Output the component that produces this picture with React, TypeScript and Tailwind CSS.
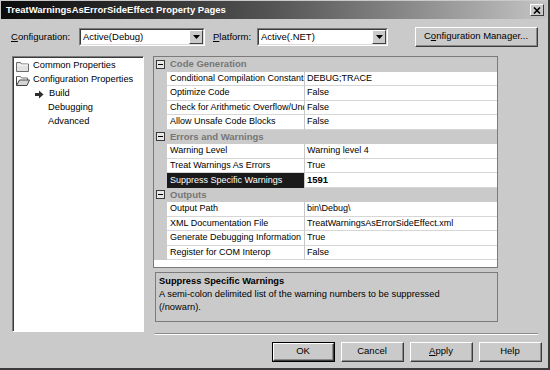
import React from 'react';

const font = { fontFamily: '"Liberation Sans", Arial, sans-serif' };

type Row = { name: string; value: string; selected?: boolean };
type Category = { title: string; rows: Row[] };

const categories: Category[] = [
  {
    title: 'Code Generation',
    rows: [
      { name: 'Conditional Compilation Constants', value: 'DEBUG;TRACE' },
      { name: 'Optimize Code', value: 'False' },
      { name: 'Check for Arithmetic Overflow/Underflow', value: 'False' },
      { name: 'Allow Unsafe Code Blocks', value: 'False' },
    ],
  },
  {
    title: 'Errors and Warnings',
    rows: [
      { name: 'Warning Level', value: 'Warning level 4' },
      { name: 'Treat Warnings As Errors', value: 'True' },
      { name: 'Suppress Specific Warnings', value: '1591', selected: true },
    ],
  },
  {
    title: 'Outputs',
    rows: [
      { name: 'Output Path', value: 'bin\\Debug\\' },
      { name: 'XML Documentation File', value: 'TreatWarningsAsErrorSideEffect.xml' },
      { name: 'Generate Debugging Information', value: 'True' },
      { name: 'Register for COM Interop', value: 'False' },
    ],
  },
];

function Combo({ width, text }: { width: string; text: string }) {
  return (
    <div className={`${width} h-[18px] flex border-t border-l border-[#7c7c7c] border-b border-r border-b-white border-r-white`}>
      <div className="flex-1 flex border-t border-l border-[#3a3a3a] border-b border-r border-b-[#dcdcdc] border-r-[#dcdcdc] bg-white">
        <span className="flex-1 pl-[2px] leading-[14px] text-[9.5px] text-black">{text}</span>
        <DropButton />
      </div>
    </div>
  );
}

function DropButton() {
  return (
    <div className="w-[14px] h-full bg-[#cacaca] border-t border-l border-white border-b border-r border-b-[#404040] border-r-[#404040] flex items-center justify-center">
      <svg width="7" height="4" viewBox="0 0 7 4">
        <path d="M0 0h7L3.5 4z" fill="#000" />
      </svg>
    </div>
  );
}

function Button({ children, def, width = 'w-[63px]' }: { children: React.ReactNode; def?: boolean; width?: string }) {
  return (
    <div className={`${width} h-[20px] ${def ? 'border border-black' : ''} flex`}>
      <div className="flex-1 flex border-t border-l border-white border-b border-r border-b-[#3c3c3c] border-r-[#3c3c3c] bg-[#cacaca]">
        <div className="flex-1 flex items-center justify-center border-b border-r border-[#8a8a8a] text-[9.5px] text-black">
          {children}
        </div>
      </div>
    </div>
  );
}

function ClosedFolder() {
  return (
    <svg width="13" height="11" viewBox="0 0 13 11">
      <path d="M0.5 1.5h4l1 1.5h7v7.5h-12z" fill="#e2e2e2" stroke="#6c6c6c" />
      <path d="M1 4h11" stroke="#ffffff" />
    </svg>
  );
}

function OpenFolder() {
  return (
    <svg width="14" height="11" viewBox="0 0 14 11">
      <path d="M0.5 1.5h4l1 1.5h6v2" fill="none" stroke="#6c6c6c" />
      <path d="M0.5 1.5v9h10.5l2.5-5.5h-10l-3 5.5" fill="#d6d6d6" stroke="#444" />
    </svg>
  );
}

function Arrow() {
  return (
    <svg width="9" height="9" viewBox="0 0 9 9">
      <path d="M0 3h4V0.5L8.5 4.5 4 8.5V6H0z" fill="#2e2e2e" />
    </svg>
  );
}

function Expander() {
  return (
    <div className="w-[9px] h-[9px] border border-[#3a3a3a] bg-[#e8e8e8] flex items-center justify-center">
      <div className="w-[5px] h-px bg-black" />
    </div>
  );
}

export default function App() {
  return (
    <div className="w-[550px] h-[370px] bg-[#cacaca] border-r-2 border-b-2 border-r-[#3a3a3a] border-b-[#3a3a3a] flex flex-col overflow-hidden" style={font}>
      {/* title bar */}
      <div className="h-[18px] mt-[1px] mx-[1px] flex items-center bg-linear-to-r from-[#0c0c0c] via-[#555555] to-[#c4c4c4] pl-[5px] pr-[3px]">
        <span className="flex-1 text-white font-bold text-[9.5px] leading-none">
          TreatWarningsAsErrorSideEffect Property Pages
        </span>
        <div className="w-[14px] h-[12px] bg-[#cacaca] border-t border-l border-white border-b border-r border-b-[#3a3a3a] border-r-[#3a3a3a] flex items-center justify-center">
          <svg width="8" height="7" viewBox="0 0 8 7">
            <path d="M1 0.5l6 6M7 0.5l-6 6" stroke="#000" strokeWidth="1.6" />
          </svg>
        </div>
      </div>

      {/* configuration row */}
      <div className="mt-[9px] h-[18px] flex items-center text-[9.5px] text-black">
        <span className="ml-[11px] w-[68px]">
          <span className="underline">C</span>onfiguration:
        </span>
        <Combo width="w-[126px]" text="Active(Debug)" />
        <span className="ml-[8px] w-[44px]">
          <span className="underline">P</span>latform:
        </span>
        <Combo width="w-[131px]" text="Active(.NET)" />
        <div className="ml-[27px]">
          <Button width="w-[123px]">
            C<span className="underline">o</span>nfiguration Manager...
          </Button>
        </div>
      </div>

      {/* main area */}
      <div className="mt-[10px] flex text-[9.3px] text-black">
        {/* tree */}
        <div className="ml-[12px] w-[132px] h-[276px] border-t border-l border-[#7c7c7c] border-b border-r border-b-white border-r-white flex">
          <div className="flex-1 border-t border-l border-[#3a3a3a] bg-white pt-[1px]">
            <div className="h-[14px] flex items-center pl-[2px] gap-[4px]">
              <ClosedFolder />
              <span>Common Properties</span>
            </div>
            <div className="h-[14px] flex items-center pl-[2px] gap-[3px]">
              <OpenFolder />
              <span>Configuration Properties</span>
            </div>
            <div className="h-[14px] flex items-center pl-[21px] gap-[5px]">
              <Arrow />
              <span>Build</span>
            </div>
            <div className="h-[14px] flex items-center pl-[34px]">
              <span>Debugging</span>
            </div>
            <div className="h-[14px] flex items-center pl-[34px]">
              <span>Advanced</span>
            </div>
          </div>
        </div>

        {/* property grid + description */}
        <div className="ml-[9px] w-[345px] flex flex-col">
          <div className="h-[212px] border border-[#7b7b7b] bg-white flex flex-col overflow-hidden text-[9px]">
            {categories.map((cat) => (
              <React.Fragment key={cat.title}>
                <div className="h-[14.5px] shrink-0 bg-[#cacaca] flex items-center">
                  <div className="w-[13px] flex justify-center">
                    <Expander />
                  </div>
                  <span className="pl-[3px] font-bold text-[#767676] text-[9.5px]">{cat.title}</span>
                </div>
                {cat.rows.map((r) => (
                  <div key={r.name} className="h-[14.5px] shrink-0 flex">
                    <div className="w-[13px] bg-[#cacaca]" />
                    <div
                      className={`w-[138px] border-r border-[#c8c8c8] pl-[3px] overflow-hidden whitespace-nowrap flex items-center ${
                        r.selected ? 'bg-[#1a1a1a] text-white' : 'border-b border-b-[#d6d6d6]'
                      }`}
                    >
                      {r.name}
                    </div>
                    <div
                      className={`flex-1 pl-[2px] border-b border-[#d6d6d6] overflow-hidden whitespace-nowrap flex items-center ${
                        r.selected ? 'font-bold text-[9.5px]' : ''
                      }`}
                    >
                      {r.value}
                    </div>
                  </div>
                ))}
              </React.Fragment>
            ))}
          </div>
          <div className="mt-[4px] ml-[2px] w-[343px] h-[50px] border border-[#7b7b7b] px-[3px] pt-[2px]">
            <div className="font-bold leading-[13px]">Suppress Specific Warnings</div>
            <div className="leading-[13px]">
              A semi-colon delimited list of the warning numbers to be suppressed
              <br />
              (/nowarn).
            </div>
          </div>
        </div>
      </div>

      {/* separator */}
      <div className="ml-[155px] mt-[1px] w-[383px] border-t border-[#8a8a8a] border-b border-b-white" />

      {/* buttons */}
      <div className="mt-[7px] pr-[6px] flex justify-end gap-[6px]">
        <Button def>OK</Button>
        <Button>Cancel</Button>
        <Button>
          <span className="underline">A</span>pply
        </Button>
        <Button>Help</Button>
      </div>
    </div>
  );
}
